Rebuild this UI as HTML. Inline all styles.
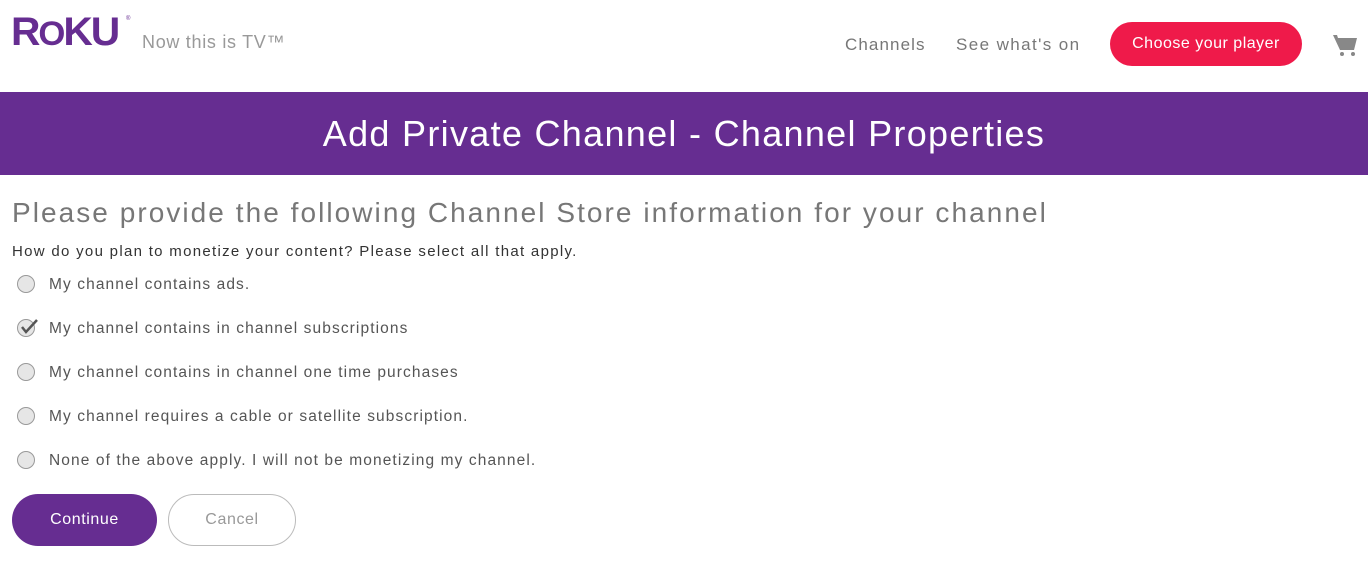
<!DOCTYPE html>
<html><head><style>
body{margin:0;width:1368px;height:584px;background:#fff;font-family:"Liberation Sans",sans-serif;position:relative;overflow:hidden}
.a{position:absolute;white-space:nowrap}
.radio{position:absolute;left:17px;width:18px;height:18px;border-radius:50%;border:1px solid #999;background:#e6e6e6;box-sizing:border-box}
.opt{position:absolute;left:49px;font-size:15.5px;color:#555;letter-spacing:1.1px}
</style></head><body>
<div class="a" style="left:11px;top:10px;font-size:40px;font-weight:bold;color:#662d91;letter-spacing:-2px;transform:scale(1.02,1.0);transform-origin:left">R<span style="font-size:34px">O</span>KU</div>
<div class="a" style="left:126px;top:16px;font-size:6px;color:#662d91">®</div>
<div class="a" style="left:142px;top:32px;font-size:18px;color:#999;letter-spacing:0.7px">Now this is TV™</div>
<div class="a" style="left:845px;top:35px;font-size:17px;color:#777;letter-spacing:1.1px">Channels</div>
<div class="a" style="left:956px;top:35px;font-size:17px;color:#777;letter-spacing:1.4px">See what's on</div>
<div class="a" style="left:1110px;top:22px;width:192px;height:44px;border-radius:22px;background:#ef1a4a;color:#fff;font-size:16px;line-height:44px;text-align:center;letter-spacing:0.5px">Choose your player</div>
<svg class="a" style="left:1333px;top:32px" width="26" height="26" viewBox="0 0 26 26"><path d="M0 3h4l1 3h19l-3 12H7z" fill="#888"/><circle cx="9" cy="22" r="2" fill="#888"/><circle cx="20" cy="22" r="2" fill="#888"/></svg>
<div class="a" style="left:0;top:92px;width:1368px;height:83px;background:#662d91;color:#fff;font-size:36px;line-height:83px;text-align:center;letter-spacing:1.3px">Add Private Channel - Channel Properties</div>
<div class="a" style="left:12px;top:197px;font-size:28px;color:#777;letter-spacing:2.05px">Please provide the following Channel Store information for your channel</div>
<div class="a" style="left:12px;top:243px;font-size:15px;color:#333;letter-spacing:1.3px">How do you plan to monetize your content? Please select all that apply.</div>
<div class="radio" style="top:275px"></div><div class="opt a" style="top:276px">My channel contains ads.</div>
<div class="radio" style="top:319px"></div><svg class="a" style="left:19px;top:316px" width="20" height="20"><path d="M3 11l4 5 11-12" stroke="#555" stroke-width="2.5" fill="none"/></svg><div class="opt a" style="top:320px">My channel contains in channel subscriptions</div>
<div class="radio" style="top:363px"></div><div class="opt a" style="top:364px">My channel contains in channel one time purchases</div>
<div class="radio" style="top:407px"></div><div class="opt a" style="top:408px">My channel requires a cable or satellite subscription.</div>
<div class="radio" style="top:451px"></div><div class="opt a" style="top:452px">None of the above apply. I will not be monetizing my channel.</div>
<div class="a" style="left:12px;top:494px;width:145px;height:52px;border-radius:26px;background:#662d91;color:#fff;font-size:16px;line-height:52px;text-align:center;letter-spacing:0.6px">Continue</div>
<div class="a" style="left:168px;top:494px;width:128px;height:52px;border-radius:26px;border:1px solid #bbb;box-sizing:border-box;color:#999;font-size:16px;line-height:50px;text-align:center;letter-spacing:0.6px">Cancel</div>
</body></html>
